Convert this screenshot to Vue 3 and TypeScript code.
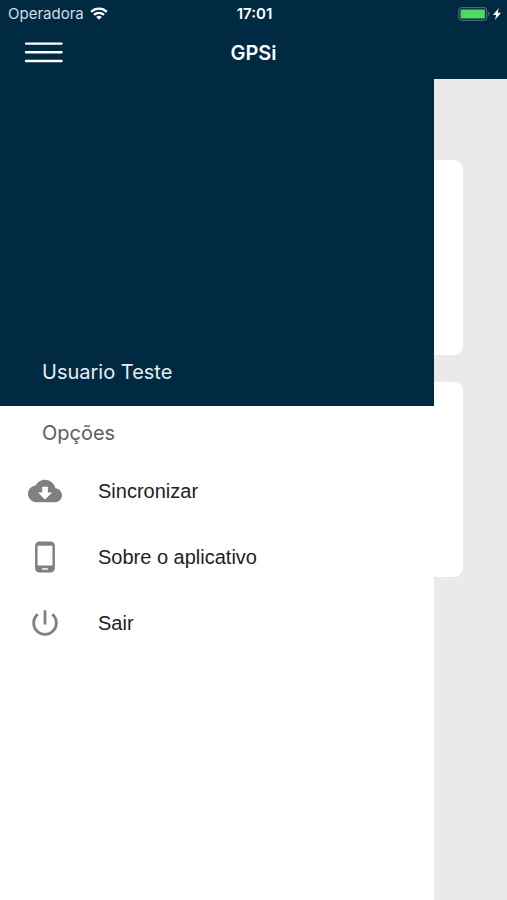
<script setup lang="ts">
interface MenuOption {
  label: string
  icon: string
}

const userName = 'Usuario Teste'

const options: MenuOption[] = [
  {
    label: 'Sincronizar',
    icon: 'M19.35 10.04C18.67 6.59 15.64 4 12 4 9.11 4 6.6 5.64 5.35 8.04 2.34 8.36 0 10.91 0 14c0 3.31 2.69 6 6 6h13c2.76 0 5-2.24 5-5 0-2.64-2.05-4.78-4.65-4.96zM17 13l-5 5-5-5h3V9h4v4h3z',
  },
  {
    label: 'Sobre o aplicativo',
    icon: 'M16 1H8C6.34 1 5 2.34 5 4v16c0 1.66 1.34 3 3 3h8c1.66 0 3-1.34 3-3V4c0-1.66-1.34-3-3-3zm-2 20h-4v-1h4v1zm3.25-3H6.75V4h10.5v14z',
  },
  {
    label: 'Sair',
    icon: 'M13 3h-2v10h2V3zm4.83 2.17l-1.42 1.42C17.99 7.86 19 9.81 19 12c0 3.87-3.13 7-7 7s-7-3.13-7-7c0-2.19 1.01-4.14 2.58-5.42L6.17 5.17C4.23 6.82 3 9.26 3 12c0 4.97 4.03 9 9 9s9-4.03 9-9c0-2.74-1.23-5.18-3.17-6.83z',
  },
]
</script>

<template>
  <div class="app">
    <header class="header">
      <div class="status">
        <div class="carrier">
          <span>Operadora</span>
          <svg class="wifi" viewBox="0 0 18 13" aria-hidden="true">
            <path d="M1.2 4.8a11.2 11.2 0 0 1 15.6 0M4 7.8a7.2 7.2 0 0 1 10 0" fill="none" stroke="currentColor" stroke-width="2.3" />
            <path d="M9 12.8 6.2 10a4 4 0 0 1 5.6 0z" fill="currentColor" />
          </svg>
        </div>
        <span class="clock">17:01</span>
        <div class="power">
          <svg class="battery" viewBox="0 0 32 14" aria-hidden="true">
            <rect x="0.7" y="0.7" width="28" height="12.6" rx="3.2" fill="none" stroke="#4c677b" stroke-width="1.3" />
            <rect x="2.5" y="2.5" width="24.4" height="9" rx="1.2" fill="#4cd964" />
            <path d="M30 4.8c1.8.6 1.8 3.8 0 4.4z" fill="#4c677b" />
          </svg>
          <svg class="bolt" viewBox="0 0 8 12" aria-hidden="true">
            <path d="M5.8 0 0 7h3.2L2 12 8 4.8H4.6z" fill="currentColor" />
          </svg>
        </div>
      </div>
      <div class="toolbar">
        <button class="toggle" type="button" aria-label="Menu">
          <svg viewBox="0 0 40 22" aria-hidden="true">
            <path d="M2 1.6h35.5M2 10.3h35.5M2 19h35.5" stroke="currentColor" stroke-width="2.4" stroke-linecap="round" />
          </svg>
        </button>
        <h1 class="title">GPSi</h1>
      </div>
    </header>

    <div class="stage">
      <main class="content">
        <section class="card"></section>
        <section class="card"></section>
      </main>

      <aside class="drawer">
        <div class="profile">{{ userName }}</div>
        <nav class="menu">
          <h2 class="heading">Opções</h2>
          <button v-for="option in options" :key="option.label" class="item" type="button">
            <svg class="icon" viewBox="0 0 24 24" aria-hidden="true">
              <path :d="option.icon" fill="currentColor" />
            </svg>
            <span>{{ option.label }}</span>
          </button>
        </nav>
      </aside>
    </div>
  </div>
</template>

<style>
body {
  margin: 0;
}
</style>

<style scoped>
.app {
  display: flex;
  flex-direction: column;
  min-height: 100vh;
  background: #eaeaea;
  font-family: Inter, 'Liberation Sans', sans-serif;
}

.header {
  background: #002942;
  color: #fff;
}

.status {
  display: grid;
  grid-template-columns: 1fr auto 1fr;
  align-items: center;
  height: 27px;
  padding: 0 6px 0 8px;
  font-size: 15px;
}

.carrier {
  display: flex;
  align-items: center;
  gap: 6px;
  color: #d3dee6;
}

.wifi {
  width: 18px;
  height: 13px;
  color: #fff;
}

.clock {
  font-weight: 600;
}

.power {
  display: flex;
  align-items: center;
  justify-content: flex-end;
  gap: 3px;
}

.battery {
  width: 32px;
  height: 14px;
}

.bolt {
  width: 8px;
  height: 12px;
}

.toolbar {
  display: grid;
  grid-template-columns: 1fr auto 1fr;
  align-items: center;
  height: 52px;
  padding: 0 24px;
  box-sizing: border-box;
}

.toggle {
  justify-self: start;
  width: 40px;
  padding: 0;
  border: 0;
  background: none;
  color: #fff;
}

.toggle svg {
  display: block;
  width: 40px;
  height: 22px;
}

.title {
  margin: 0;
  font-size: 20px;
  font-weight: 600;
}

.stage {
  display: grid;
  flex: 1;
}

.content,
.drawer {
  grid-area: 1 / 1;
}

.content {
  display: flex;
  flex-direction: column;
  gap: 27px;
  padding: 81px 44px;
}

.card {
  height: 195px;
  border-radius: 9px;
  background: #fff;
}

.drawer {
  z-index: 1;
  width: 85.6%;
  background: #fff;
}

.profile {
  display: flex;
  align-items: flex-end;
  height: 327px;
  padding: 0 42px 21px;
  box-sizing: border-box;
  background: #002942;
  color: #e6edf2;
  font-size: 20px;
  line-height: 26px;
}

.heading {
  margin: 0;
  padding: 14px 42px 12px;
  color: #5c5c5c;
  font-size: 20px;
  font-weight: 400;
  line-height: 26px;
}

.item {
  display: flex;
  align-items: center;
  gap: 36px;
  width: 100%;
  height: 66px;
  padding: 0 28px;
  border: 0;
  background: none;
  color: #222;
  font-family: 'Liberation Sans', sans-serif;
  font-size: 20px;
  text-align: left;
}

.icon {
  width: 34px;
  height: 34px;
  color: #808080;
}
</style>
